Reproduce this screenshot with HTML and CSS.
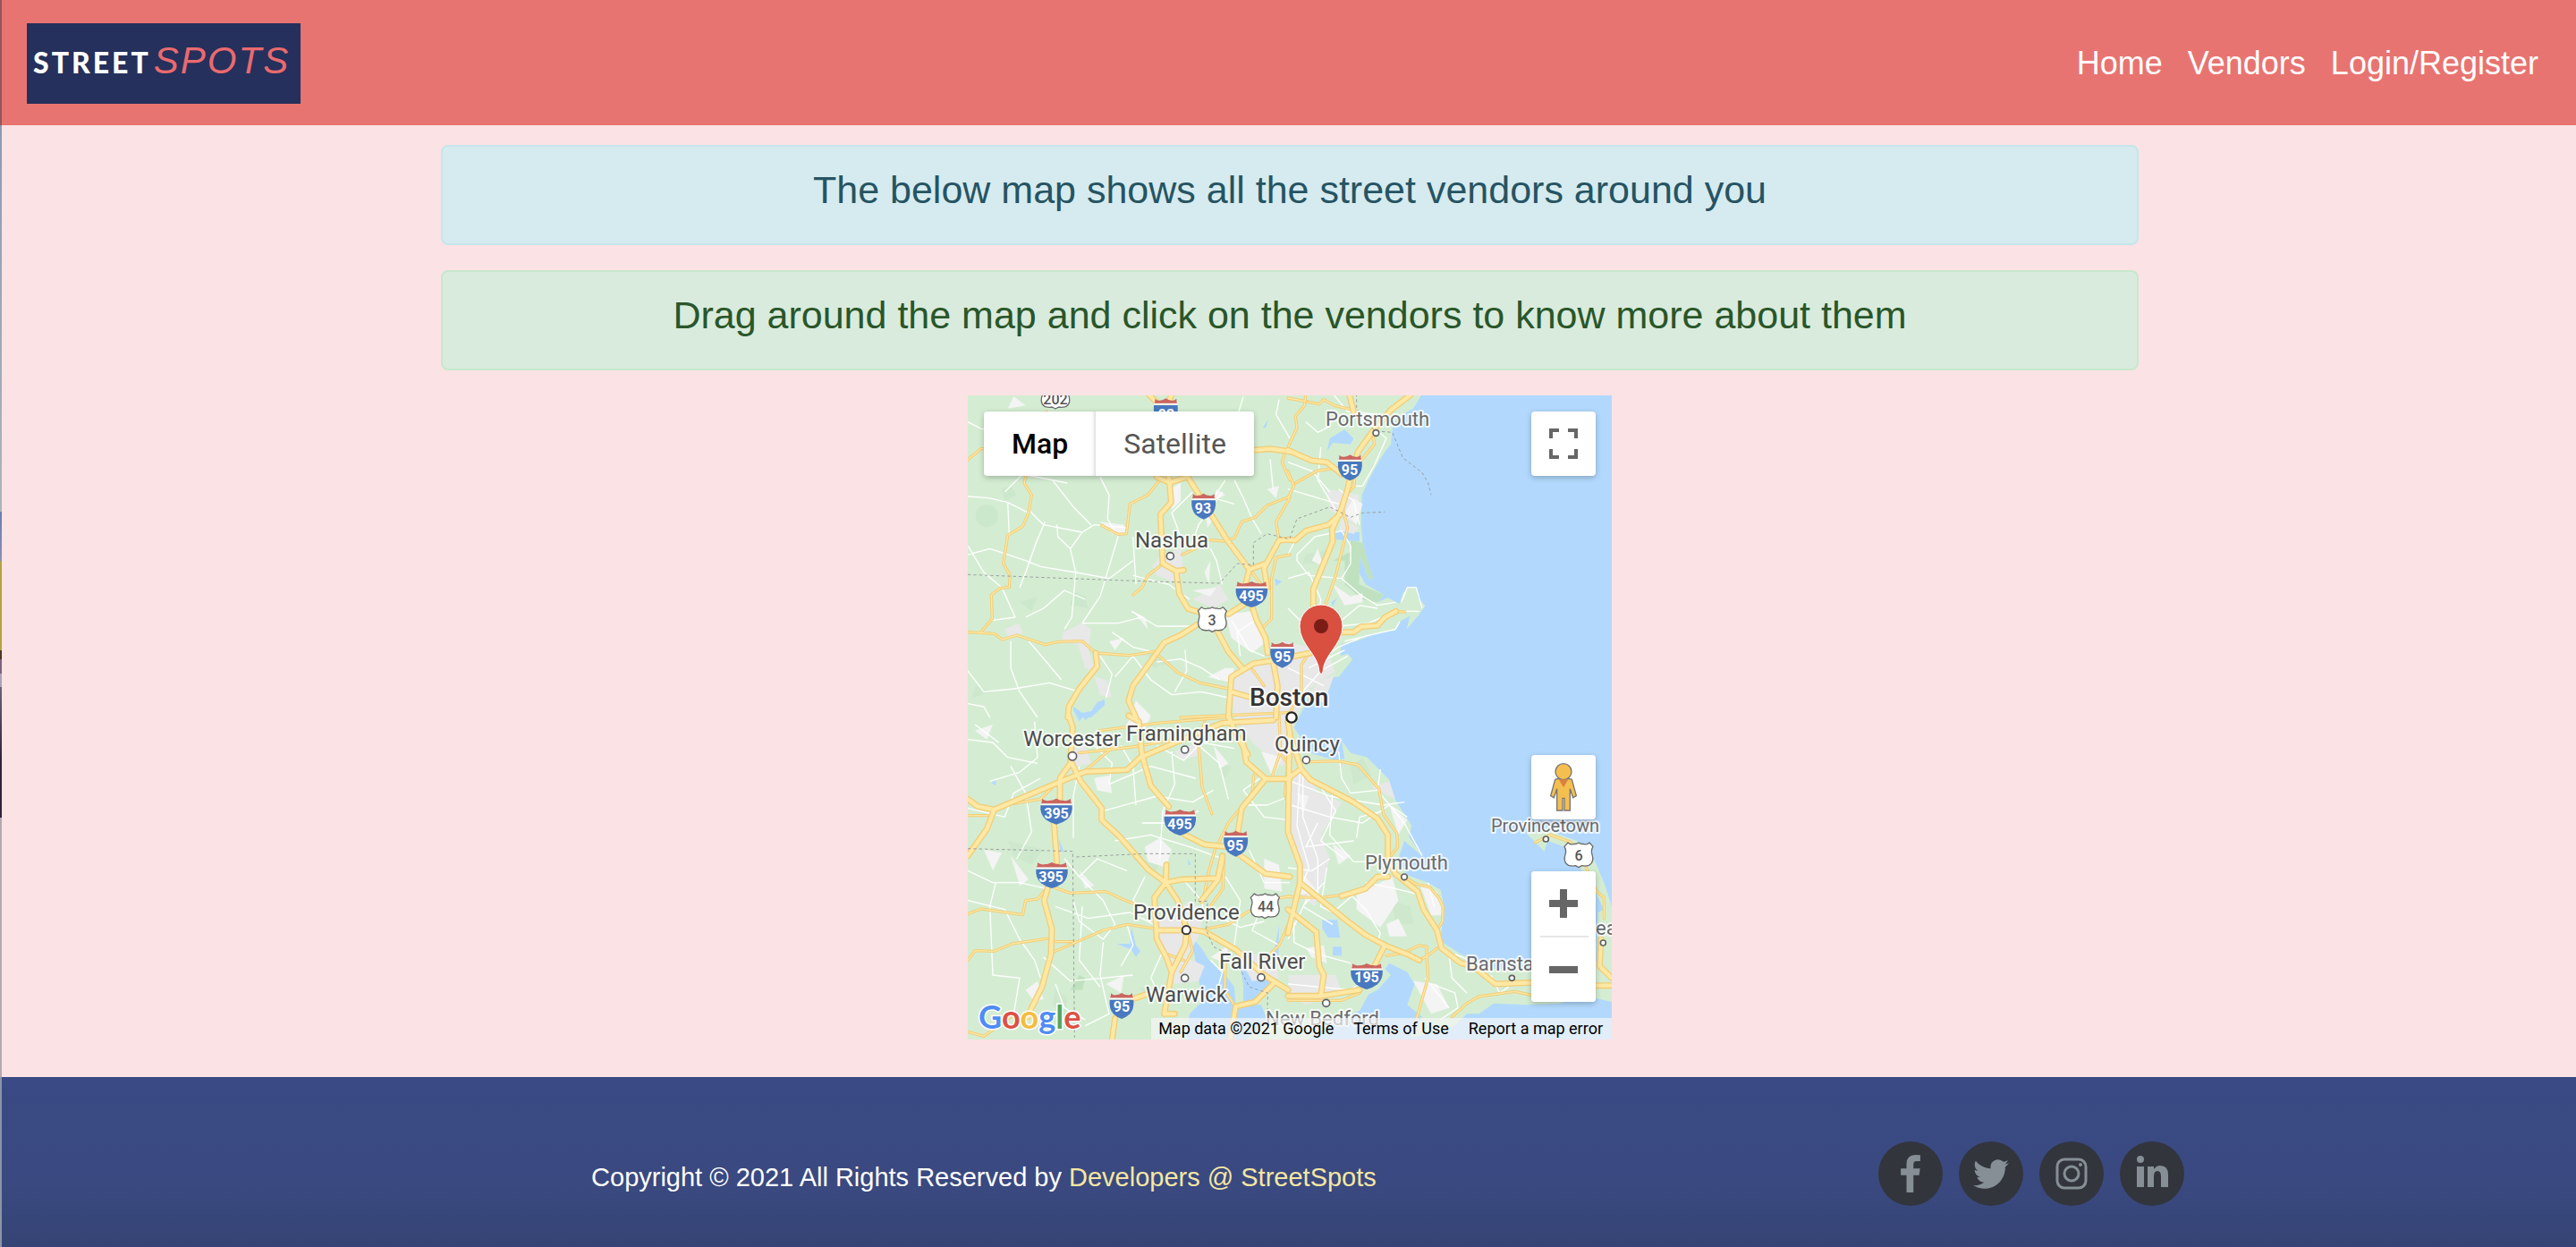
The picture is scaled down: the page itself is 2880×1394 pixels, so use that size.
FILE: index.html
```html
<!DOCTYPE html>
<html lang="en">
<head>
<meta charset="utf-8">
<meta name="viewport" content="width=device-width, initial-scale=1">
<title>StreetSpots</title>
<link rel="stylesheet" href="styles.css">
</head>
<body>
<header class="navbar">
  <a class="brand" href="#" aria-label="StreetSpots"><span class="brand-street">STREET</span><span class="brand-spots">SPOTS</span></a>
  <nav class="nav">
    <a href="#">Home</a>
    <a href="#">Vendors</a>
    <a href="#">Login/Register</a>
  </nav>
</header>

<main class="content">
  <h1 class="alert alert-info">The below map shows all the street vendors around you</h1>
  <h2 class="alert alert-success">Drag around the map and click on the vendors to know more about them</h2>

  <section class="map" aria-label="Vendor map">
    <svg class="map-canvas" viewBox="0 0 720 720" role="img" aria-label="Map of the Boston area">
      <defs>
        <symbol id="i2" viewBox="0 0 82 87" overflow="visible">
          <path d="M5 1Q12 9 21 7Q32 7 41 0Q50 7 61 7Q70 9 77 1Q76 10 80 19H2Q6 10 5 1Z" fill="#cb6660"/>
          <path d="M1 19H81" stroke="#fff" stroke-width="5"/>
          <path d="M1 23H81Q84 52 69 70Q58 81 41 87Q24 81 13 70Q-2 52 1 23Z" fill="#4878c0"/>
        </symbol>
        <symbol id="i3" viewBox="0 0 108 87" overflow="visible">
          <path d="M6 1Q17 9 28 7Q42 7 54 0Q66 7 80 7Q91 9 102 1Q101 10 106 19H2Q7 10 6 1Z" fill="#cb6660"/>
          <path d="M1 19H107" stroke="#fff" stroke-width="5"/>
          <path d="M1 23H107Q110 52 90 70Q75 82 54 87Q33 82 18 70Q-2 52 1 23Z" fill="#4878c0"/>
        </symbol>
        <symbol id="us" viewBox="0 0 100 86" overflow="visible">
          <path d="M14 2Q22 11 34 6Q42 8 50 2Q58 8 66 6Q78 11 86 2L98 15Q90 28 95 42Q103 68 84 78Q70 82 61 79L50 85L39 79Q30 82 16 78Q-3 68 5 42Q10 28 2 15Z" fill="#fff" stroke="#6b6b6b" stroke-width="4"/>
        </symbol>

        <g id="highways">
          <g>
            <path d="M610 0L680 70M690 0L670 60M680 270L688 365L652 405L660 570L705 595L730 592M705 595L715 670L745 722L790 735M735 265L875 490L950 590L935 650M640 280L682 298L740 280M880 740L935 705M775 775L720 810L665 835L640 870L560 980L545 1030L570 1086M840 790L880 865L930 925M1030 895L965 905L890 950L880 1086M960 715L975 760L1005 820L1012 870M1086 490L1050 492L1000 585L1010 650M950 590L1000 572M965 190L1020 185L1090 195M435 870L440 915L380 990L345 1050L342 1086M1030 900L1045 980L1040 1086M890 1000L960 1020"/>
          </g>
          <g transform="translate(1080)">
            <path d="M410 5L345 55L285 125L235 195L215 255L200 320L180 385L148 455L150 495L85 655L85 790M0 190L80 225L130 230L180 270M0 490L25 492L60 460L135 440L175 405M205 0L220 60M180 800L220 800L245 782L300 778L325 750L362 730M0 885L75 870"/>
          </g>
          <g transform="translate(0 1080)">
            <path d="M345 0L358 40L350 150M6 280L40 305L95 315L320 220L400 188L540 182L585 140L760 65L860 25L1030 15M95 315L70 380L6 470M350 160L315 210L315 280M355 160L385 220L455 310L455 350L515 405L610 515L670 560L720 550L845 545L860 470M295 360L305 490M275 575L262 620L288 715L285 800L255 910L220 980L210 1010M545 0L580 20L590 130L620 235L680 305M735 400L800 432L880 440L935 480L1005 530L1086 540M930 95L940 155L1005 212L925 310L910 400M1005 212L1086 212M880 0L905 60L945 130M672 500L670 560L632 610L640 750L672 810L690 860L665 1000L700 1000M670 560L710 620L740 715L800 725L905 785L1000 870L1080 920M740 720L735 770L690 860M640 720L720 720M860 480L845 550L790 620M605 935L560 950M500 1015L490 1086M885 1086L905 975L970 960L1030 900"/>
          </g>
          <g transform="translate(1080 1080)">
            <path d="M0 20L8 70L45 180L75 215L220 290L300 345L335 400L335 480L360 530L435 590L455 650L500 720L515 780L580 830L620 840L695 900L830 895M0 210L42 180M5 60L0 390L40 500L40 560L0 730M40 560L200 690L260 735L325 770L400 800L440 820M0 940L110 940L240 920M110 940L120 870L105 840L95 725L0 650M1000 905H1086M325 770L290 840M335 540L300 540L260 580L180 605M1050 750L1045 840L1086 880"/>
          </g>
        </g>

        <g id="arterials">
          <g>
            <path d="M6 222L50 185L130 183M270 60L230 150L195 300L220 340L210 400L190 445L140 475L125 570L148 610L145 650L115 652L85 675L88 755L50 800M6 800L95 805L122 825L170 810L265 842L310 832L390 830L435 870L550 878L630 865L710 935L785 970L880 990M650 290L610 340L550 370L538 470L510 472L455 442M770 520L725 540M560 675L590 650L610 610L655 575M810 490L865 495L900 485L925 430L970 415L1010 375L1086 345M1086 290L1060 230L1070 200M1086 350L1040 430L1050 490M1086 540L1040 550L1025 620L1025 755L990 790M960 600L990 640M720 1086L1086 1070M960 925L1000 980"/>
          </g>
          <g transform="translate(1080)">
            <path d="M0 15L105 35L120 20L155 40L220 55M60 0L55 40L25 75L30 115L0 180M0 350L20 310L0 260M25 300L100 258L165 250M285 140L290 170L245 225M225 260L222 310L195 340M185 390L200 450L160 610L125 710M362 732L392 732M70 870L45 910L45 1000M0 1080L45 1000"/>
          </g>
          <g transform="translate(0 1080)">
            <path d="M6 335L75 335M6 665L50 648L190 668L200 620L240 615L270 580M300 578L350 595L470 590L535 620L630 655M6 820L30 788L95 790L155 765L270 748M290 758L365 758M288 795L460 720L540 700L640 715M380 125L560 105L760 70M370 210L440 150L500 100M800 20L780 100L792 240L825 330M160 295L250 280L290 240M965 200L960 260L880 360L835 450L815 520L795 620M865 470L862 580L805 660M805 715L880 700L950 655M1040 615L1086 605M745 730L760 790L720 860M675 800L730 820M1086 690L1050 770L1010 810M870 830L868 920L900 970M6 1060L60 1075L150 1010M1050 0L1055 120L1025 210M1055 130L1080 160L1070 260L1086 330M450 50L640 25L880 5"/>
          </g>
          <g transform="translate(1080 1080)">
            <path d="M75 155L165 152L235 165L305 245L320 330L365 395L368 440L345 470M390 540L430 565L475 575L505 610L520 640L518 690L500 720M0 608L110 610L180 602M500 780L470 805L440 820L390 795L330 805M390 795L440 770L465 775L465 810L470 880L430 1020M550 1010L600 965L640 942L760 925L830 940M830 425L880 400L950 425M1000 510L1035 590L1060 610L1060 680M0 955L180 955L240 930"/>
          </g>
        </g>
      </defs>

      <rect width="720" height="720" fill="#b2d9fd"/>
      <g transform="translate(-2 -2) scale(.33333)" stroke-linejoin="round">
        <path class="land" d="M0 0H1530L1500 50L1465 70L1432 100L1425 170L1405 195L1380 235L1350 290L1328 340L1325 440L1330 500L1345 560L1366 622L1350 620L1322 545L1318 600L1340 640L1402 675L1380 700L1415 685L1455 705L1465 670L1485 650L1512 648L1515 685L1540 712L1520 740L1478 790L1490 745L1455 765L1440 795L1380 802L1310 830L1258 840L1256 880L1280 872L1296 892L1250 950L1215 950L1180 985L1150 1020L1130 1060L1100 1120L1120 1150L1105 1190L1170 1210L1240 1230L1270 1225L1260 1165L1290 1205L1345 1220L1370 1245L1420 1295L1422 1330L1435 1355L1495 1450L1485 1485L1530 1550L1470 1500L1450 1560L1480 1615L1550 1640L1592 1665L1605 1730L1595 1800L1590 1835L1660 1880L1770 1930H2100L2115 1900L2120 1740L2140 1730L2110 1670L2080 1620L2010 1520L1950 1500L1940 1535L1910 1505L1880 1475L1960 1468L2050 1500L2110 1570L2140 1640L2166 1720V2040L2080 2020L1990 2045L1880 2050L1770 2045L1720 2080L1680 2080L1640 2120L1580 2140L1490 2160L1530 2090L1480 2050L1505 1980L1480 1940L1420 1910L1405 1930L1425 1950L1380 2000L1350 2015L1320 2070L1260 2090L1140 2170H0Z"/>
        <path class="wood" d="M1290 490L1330 500L1366 622L1350 620L1322 545L1318 640L1402 675L1380 700L1330 690L1270 640L1270 560L1230 560L1290 530ZM380 1950L400 1960L390 2000L350 2000Z"/>
        <g class="haze"><circle cx="70" cy="410" r="38"/><path d="M120 320l30-10 20 30-40 20ZM150 220l40-15 10 40-40 10ZM360 660l40 20 10 40-60-10ZM180 700l60-20-20 50ZM600 860l90 40-60 20ZM1140 540l90-20-20 50-80 0ZM1290 1250l40-30 30 60-60 30ZM140 1500l120 30-40 50-60-30ZM560 1560l90 10-20 50ZM1430 1700l60 20 10 60-60 0ZM580 1990l60 10-20 50ZM300 1990l40 40-10 60-40-40ZM840 1240l50 10-20 40ZM30 980l60 20-70 20Z"/></g>
        <path class="water" d="M360 1050L390 1070L420 1065L440 1035L465 1025V1045L420 1086H390L380 1100L360 1060ZM995 115l20-30-10 30ZM1035 620l25 10-20 15ZM1220 150l50-30 30 30-10 20-60-5-20 30ZM1240 460l80 5v30l-80-5ZM1300 375l20-15v20l-10 15ZM1225 700l20-15-15 30ZM310 1490l20 50-15-10ZM555 1790l15 60 15 20-15 20-15-25-50-20 45 0ZM390 1080h30l-20 15ZM85 1305l15-10v20ZM745 1560l10 20h-10ZM1195 1765l50 0 10 60-40 0-20-30ZM1230 1855l30 0 0 30-30 0ZM755 1820L790 1860L815 1900L870 1950L900 1990L905 2060L880 2166H740L750 2080L790 2040L780 1960ZM915 1900L950 1950L1035 1930L1040 1960L1010 1990L960 2060L930 2040L930 1980ZM1030 1890L1050 1780L1048 1900ZM910 2050l80 0 20 50-70 66H890Z"/>
        <path class="urban" d="M625 580L655 540L720 520L730 600L690 630L640 610ZM760 690L850 640L880 690L830 720ZM920 930L1010 900L1060 830L1150 850L1220 880L1240 940L1180 970L1130 1040L1090 1130L1110 1200L1060 1250L960 1170L900 1080L890 980ZM325 800L390 770L420 790L410 860L435 930L400 920L375 840L320 830ZM690 1750L750 1700L800 1740L780 1820L740 1890L800 1920L780 1970L700 1980L650 1860L640 1760ZM340 1200L400 1180L420 1240L370 1250ZM1080 1950L1240 1950L1260 2010L1140 2050L1090 2020ZM1090 1260L1150 1270L1180 1340L1260 1370L1190 1480L1220 1560L1170 1720L1130 1690L1090 1480ZM1260 420L1320 450L1300 470L1250 460ZM910 1880L1030 1880L1050 1960L960 1970ZM430 950L470 960L490 1020L450 1010ZM130 790L180 770L190 805L140 815ZM1200 1040L1240 930L1150 990ZM700 1200L780 1170L790 1210L720 1230ZM1360 1320L1420 1300L1440 1360ZM980 1120l80-20 20 100-80 0ZM1210 320l110 20-10 100-90-50Z"/>
        <path class="suburb" d="M870 740L960 730L1010 830L960 870L890 820ZM570 1030L620 1080L590 1150L540 1110ZM430 1290l50-10 10 60-50-10ZM600 1520l50-30 40 40-20 60-60-20ZM1310 1680L1430 1620L1450 1700L1390 1790L1310 1730ZM1500 1970l80 10 40 80-60 20ZM30 1130l60-20-20 50ZM380 1600l50 50-30 10ZM150 1550l60 80-30 20ZM200 2000l40-30 20 60-30 10ZM990 1200l70 20-30 70ZM1000 1560l50 20 10 90-60-10ZM470 1980l60-30-10 60ZM450 430l80 10 10 30-50 0ZM820 560l-20 40 15 40ZM680 320l40-20 0 60-30 30ZM840 320l30 20-40 20ZM760 660l80-10-20 30ZM160 10l40 30-60 10ZM800 360l30 60-20 30ZM1160 560l20-40 20 60ZM1010 320l40-10-10 40ZM1410 1780l40-20 30 60-60 0ZM560 1700l40 20-20 30ZM820 1890l60-40-10 60ZM1110 1340l40 10-20 60ZM1300 350l30 20-20 70-40-40ZM1520 1640l60 30 20 80-40 0ZM1420 1380l60 50-30 50ZM560 730l40 20 10 40ZM480 830l50-10-30 40ZM1230 640l60 40 40-10 0 30-60 10ZM900 920l-30 0-60 30 80 20ZM60 1530l60 10-30 60ZM830 1180l50 60-30 20ZM660 1400l60 30-40 40ZM1120 1600l60 70-60 10ZM1230 1510l60 40-40 30ZM1140 1860l60-10 10 60-50-20Z"/>
        <g class="minor">
          <path d="M6 95L55 120L130 75L200 80M130 330L190 270L340 300M6 345L75 350L140 365L210 400M140 365L145 470M210 390L260 440L390 465L430 440L540 450M265 430L235 500L200 600L180 650M290 290L360 380L420 440M390 465L350 520L368 600L355 750L330 790M6 510L60 600L120 650L165 750L90 760M305 440L308 480L350 520M450 280L480 340L475 420L510 480L480 580L450 680L390 770L510 770L590 750M6 540L80 520L200 560L250 580L370 600L480 620L560 560M200 750L260 720L330 660L400 690M150 830L150 920L180 1000L240 1086M6 930L60 1000L160 990L280 970L380 1000M210 830L270 900L320 960M450 880L490 940L470 1020M500 950L560 880L620 960M620 960L690 1010L790 1000L880 1020M555 730L640 780L770 780M760 330L690 400L720 480M870 290L830 350L900 370M1086 150L1040 70L1050 20M860 330L780 440L755 510M900 290L930 350L960 420L990 470M930 10L900 110L880 200M1020 220L1030 320M640 870L560 850L490 800M735 860L740 930L700 1000M850 960L790 920L720 890L640 900M860 640L840 560L820 520M750 690L680 640L560 610M560 480L570 640M6 1040L60 1050L80 1086M970 760L910 800L920 880M890 760L950 860L1000 880"/>
          <path d="M1080 230L1160 260L1220 330M1190 180L1180 290L1240 390M1140 95L1180 130L1220 110M1080 320L1180 350L1250 370M1300 60L1360 110L1410 150L1370 240L1330 310M1230 0L1280 60L1380 70M1290 310L1330 310M1110 540L1170 480L1260 460L1290 510L1290 570L1260 620L1150 610L1110 560ZM1080 620L1150 600L1190 690L1180 780M1260 620L1330 680L1380 710L1440 700M1260 760L1320 710L1380 720M1250 780L1350 770L1440 730L1520 730M1460 700L1480 650L1510 650L1530 720M1180 900L1250 850L1320 820M1150 920L1270 860M1120 1010L1190 930L1280 880M1110 480L1080 540M1270 830L1440 790L1455 765M1250 320L1300 360L1320 440M1080 720L1130 770M1080 920L1200 980"/>
          <path d="M6 1160L90 1170L140 1220L240 1240M30 1110L110 1170M230 1100L240 1220L180 1270L80 1300M150 1250L200 1340L220 1470L170 1560M6 1390L130 1420L160 1340L250 1290M380 1250L360 1350L360 1490M330 1560L380 1620L460 1700L500 1780L460 1830L380 1770L360 1700M6 1600L90 1640L180 1640L270 1660M6 1700L130 1730L180 1830L230 1900L250 1960M100 1640L80 1720L90 1950L180 1960L160 2080M260 1890L350 1970L460 1960L560 1950M300 1980L330 2060L400 2100M460 1840L450 1950L480 2080L400 2120M540 1780L560 1850L520 1920M430 1180L490 1240L480 1310L620 1250L770 1290M460 1400L640 1350L760 1370L830 1330M520 1180L560 1250L570 1380M690 1200L700 1310L660 1400L650 1560M780 1180L850 1240L880 1360M500 1500L620 1480L750 1520L860 1560M640 1180L730 1230L790 1170L900 1190M930 1380L1010 1380L1086 1350M600 1620L560 1700L640 1780M720 1620L790 1700L800 1760M380 1620L440 1560L540 1600M950 1530L1000 1640L1086 1640M870 1620L920 1700L900 1850M1000 1700L960 1800L1050 1850M1000 1280L930 1330L1000 1420L1086 1430M840 1750L920 1790L1000 1770M660 1870L620 1960L680 2080M820 1900L860 1940L840 2010M590 1440L700 1440L780 1400M300 1720L410 1760L550 1740L630 1780M390 1720L380 1900L450 1990"/>
          <path d="M1110 1260L1190 1320L1240 1400L1190 1500L1270 1560M1090 1380L1220 1420L1330 1440L1420 1380L1480 1420M1130 1220L1130 1420L1180 1560L1180 1700M1250 1200L1260 1290L1290 1340L1380 1330M1090 1300L1220 1350L1400 1380L1470 1370M1120 1270L1110 1450L1150 1590L1110 1690M1390 1260L1380 1330L1470 1440L1530 1550M1310 1490L1320 1420L1400 1400M1230 1330L1220 1480L1300 1570L1360 1570M1150 1680L1080 1830M1210 1590L1190 1720L1230 1740L1300 1680M1290 1680L1340 1730L1390 1810L1380 1840M1340 1640L1440 1660L1520 1680M1200 1640L1130 1720L1230 1780M1560 1980L1640 2010L1650 2060L1590 2100M1620 1880L1630 1960L1680 2010M1540 1960L1620 2060M1760 1950L1790 2010L1820 1990M1640 1880L1760 1930M1080 1590L1160 1600L1220 1560M1180 1440L1140 1520L1300 1500M1100 1760L1100 1840L1180 1880L1290 1910M1550 1640L1570 1720M1080 1980L1290 2000L1370 1940"/>
        </g>
        <use href="#arterials" class="art-case"/><use href="#arterials" class="art-line"/>
        <use href="#highways" class="hwy-case"/><use href="#highways" class="hwy-line"/>
        <path class="border" d="M6 607L400 622L620 630L850 636L910 570L964 575L964 500L1010 470L1085 488L1110 420L1220 380L1290 415L1330 400L1405 397M1310 0V50L1370 125L1430 130L1465 215L1530 265L1550 300L1560 340M6 1526L358 1535L364 2160M370 1554L600 1543H769V1703L810 1702L806 1800L830 1855L900 1890L950 1990L1012 2010L1010 2100"/>

        <use href="#i2" x="629" y="16" width="82" height="87"/>
        <use href="#i2" x="756" y="335" width="82" height="87"/>
        <use href="#i3" x="904" y="630" width="108" height="87"/>
        <use href="#i2" x="1020" y="833" width="82" height="87"/>
        <use href="#i2" x="1247" y="205" width="82" height="87"/>
        <use href="#i3" x="249" y="1358" width="108" height="87"/>
        <use href="#i3" x="664" y="1395" width="108" height="87"/>
        <use href="#i2" x="864" y="1466" width="82" height="87"/>
        <use href="#i3" x="234" y="1572" width="108" height="87"/>
        <use href="#i2" x="481" y="2010" width="82" height="87"/>
        <use href="#i3" x="1290" y="1911" width="108" height="87"/>
        <use href="#us" x="243" y="-34" width="114" height="86"/>
        <use href="#us" x="776" y="714" width="100" height="86"/>
        <use href="#us" x="953" y="1675" width="100" height="86"/>
        <use href="#us" x="2005" y="1504" width="100" height="86"/>
        <g class="towns">
          <circle cx="685" cy="545" r="12"/><circle cx="1375" cy="132" r="10"/>
          <circle class="capital" cx="1092" cy="1086" r="17"/><circle cx="357" cy="1216" r="14"/>
          <circle cx="734" cy="1194" r="12"/><circle cx="1141" cy="1229" r="12"/>
          <circle class="city" cx="739" cy="1799" r="14"/><circle cx="734" cy="1960" r="12"/>
          <circle cx="990" cy="1958" r="12"/><circle cx="1208" cy="2044" r="12"/>
          <circle cx="1470" cy="1621" r="10"/><circle cx="1945" cy="1494" r="9"/>
          <circle cx="1831" cy="1960" r="9"/><circle cx="2137" cy="1842" r="9"/>
        </g>
      </g>

      <g class="shield-text">
        <text x="222" y="27">93</text><text x="263" y="132">93</text><text x="317" y="230">495</text><text x="352" y="298">95</text><text x="427" y="89">95</text>
        <text x="99" y="473">395</text><text x="237" y="485">495</text><text x="299" y="509">95</text><text x="93" y="544">395</text><text x="172" y="689">95</text><text x="446" y="656">195</text>
      </g>
      <g class="route-text">
        <text x="98" y="10">202</text><text x="273" y="257">3</text><text x="333" y="577">44</text><text x="683" y="520">6</text>
      </g>
      <g class="place">
        <text x="187" y="170">Nashua</text><text x="62" y="392">Worcester</text><text x="177" y="386">Framingham</text>
        <text x="343" y="398">Quincy</text><text x="185" y="586">Providence</text><text x="199" y="678">Warwick</text><text x="281" y="641">Fall River</text>
      </g>
      <g class="place place-minor">
        <text x="400" y="34">Portsmouth</text><text x="444" y="530">Plymouth</text><text x="557" y="643">Barnsta</text>
        <text x="702" y="603">ea</text><text x="333" y="704">New Bedford</text>
      </g>
      <text class="place place-small" x="585" y="488">Provincetown</text>
      <text class="place place-main" x="315" y="347">Boston</text>
      <path d="M393 309C392 289 371 279 371 258A24 24 0 0 1 419 258C419 279 398 289 397 309Q395 314 393 309Z" fill="#d94f40" stroke="#fff" stroke-width="1"/>
      <circle cx="395" cy="258" r="8" fill="#7a1d17"/>
      <text class="google" x="12" y="708"><tspan fill="#4f8cf5">G</tspan><tspan fill="#dc5144">o</tspan><tspan fill="#f4bd41">o</tspan><tspan fill="#4f8cf5">g</tspan><tspan fill="#58a55c">l</tspan><tspan fill="#dc5144">e</tspan></text>
    </svg>

    <div class="map-types">
      <button type="button" class="map-type is-active">Map</button>
      <button type="button" class="map-type">Satellite</button>
    </div>
    <button type="button" class="map-control map-fullscreen" aria-label="Toggle fullscreen view">
      <svg viewBox="0 0 32 34" width="32" height="34" fill="none" stroke="#666" stroke-width="4"><path d="M11 2H2V11M21 2H30V11M2 23V32H11M30 23V32H21"/></svg>
    </button>
    <button type="button" class="map-control map-pegman" aria-label="Open Street View">
      <svg viewBox="0 0 90 162" width="30" height="54" fill="#f5bf50" stroke="#757575" stroke-width="4"><path d="M17 55Q20 53 28 53H62Q70 53 73 55L88 110L77 116L67 86V159H48V118H42V159H23V86L13 116L2 110Z"/><circle cx="45" cy="29" r="27"/><path d="M29 55H61L45 82Z" fill="#d98240" stroke="none"/></svg>
    </button>
    <div class="map-zoom">
      <button type="button" class="map-control" aria-label="Zoom in"><svg viewBox="0 0 32 32" width="32" height="32" fill="#666"><path d="M12 0H20V12H32V20H20V32H12V20H0V12H12Z"/></svg></button>
      <button type="button" class="map-control" aria-label="Zoom out"><svg viewBox="0 0 32 8" width="32" height="8" fill="#666"><path d="M0 0H32V8H0Z"/></svg></button>
    </div>
    <div class="map-credits">
      <span>Map data ©2021 Google</span>
      <a href="#">Terms of Use</a>
      <a href="#">Report a map error</a>
    </div>
  </section>
</main>

<footer class="footer">
  <div class="footer-inner">
    <p class="copyright">Copyright © 2021 All Rights Reserved by <a href="#">Developers @ StreetSpots</a></p>
    <div class="social">
      <a href="#" aria-label="Facebook"><svg viewBox="95 0 864 1664" width="22" height="42"><path d="M959 12v264H802q-86 0-116 36t-30 108v189h293l-39 296H656v759H350V905H95V609h255V391q0-186 104-288.500T731 0q147 0 228 12z"/></svg></a>
      <a href="#" aria-label="Twitter"><svg viewBox="0 0 512 416" width="40" height="33"><path d="M459 104c0 5 0 9 0 14 0 138-105 298-298 298C102 416 46 399 0 369c8 1 16 1 25 1 49 0 94-16 130-45-46-1-85-31-98-73 6 1 13 2 20 2 10 0 19-1 28-4-48-10-84-52-84-103v-1c14 8 30 13 47 13C40 141 22 109 22 72c0-19 5-37 14-53 52 64 129 105 216 110-2-8-3-16-3-24C249 47 296 0 354 0c30 0 57 13 77 33 23-4 46-13 66-25-8 24-24 45-46 58 21-2 41-8 60-16-14 21-32 39-52 54z"/></svg></a>
      <a href="#" aria-label="Instagram"><svg viewBox="0 0 36 36" width="36" height="36"><rect x="2" y="2" width="32" height="32" rx="8" fill="none" stroke="#868e96" stroke-width="3"/><circle cx="18" cy="18" r="8" fill="none" stroke="#868e96" stroke-width="3"/><circle cx="28" cy="8" r="2"/></svg></a>
      <a href="#" aria-label="LinkedIn"><svg viewBox="0 0 36 42" width="36" height="42"><circle cx="5" cy="5" r="4"/><path d="M1 13H9V36H1ZM13 13H20V16Q23 12 27 12Q36 12 36 22V36H28V24Q28 18 24 18Q20 18 20 24V36H13Z"/></svg></a>
    </div>
  </div>
</footer>
</body>
</html>
```
FILE: styles.css
```css
* {
  box-sizing: border-box;
}

body {
  margin: 0;
  min-height: 100vh;
  padding-left: 2px;
  display: flex;
  flex-direction: column;
  font-family: "Liberation Sans", Arial, sans-serif;
  /* thin coloured strip down the left edge of the page */
  background:
    linear-gradient(#93565c 0 140px, #8a9bb5 140px, #a9b6bb 572px, #6a7cb4 572px, #8791b5 627px, #b3a341 627px 727px, #4d3526 727px 737px, #7d6280 737px 753px, #aaa2bb 753px 768px, #6b6279 768px, #33203c 850px 914px, #b3aaae 914px 1204px, #8d93a8 1204px) left top / 2px 100% no-repeat,
    #fbe2e4;
}

a {
  color: inherit;
  text-decoration: none;
}

button {
  margin: 0;
  border: 0;
  padding: 0;
  font: inherit;
}

.navbar {
  display: flex;
  align-items: center;
  justify-content: space-between;
  height: 140px;
  padding: 2px 42px 0 28px;
  background: #e87471;
}

.brand {
  display: flex;
  align-items: baseline;
  width: 306px;
  height: 90px;
  padding: 18px 0 0 7px;
  background: #25305c;
  line-height: 48px;
}

.brand-street {
  color: #fff;
  font: 900 32px/48px Lato, sans-serif;
  letter-spacing: 3px;
}

.brand-spots {
  margin-left: 3px;
  color: #ea6a6e;
  font-size: 42px;
  font-style: italic;
  letter-spacing: 2px;
}

.nav {
  display: flex;
  gap: 28px;
  font-size: 36px;
  color: #fff;
}

.content {
  flex: 1;
  display: flex;
  flex-direction: column;
  align-items: center;
  gap: 28px;
  padding: 22px 0 42px 2px;
}

.alert {
  width: 66%;
  min-height: 112px;
  margin: 0;
  border: 2px solid;
  border-radius: 8px;
  padding: 22px 40px 34px;
  font-size: 43px;
  font-weight: 400;
  line-height: 52px;
  text-align: center;
}

.alert-info {
  color: #265463;
  background: #d6ebef;
  border-color: #c4e6ec;
}

.alert-success {
  color: #29562a;
  background: #d9ebdc;
  border-color: #c7e8cf;
}

/* Map widget */
.map {
  position: relative;
  width: 720px;
  max-width: 100%;
  overflow: hidden;
  font-family: Roboto, sans-serif;
}

.map-canvas {
  display: block;
  width: 100%;
}

.land { fill: #d4edd2; }
.wood { fill: #c0e1bf; }
.haze { fill: #cae6ca; opacity: .7; }
.water { fill: #b2d9fd; }
.urban { fill: #e8e8e8; }
.suburb { fill: #f3f4f3; }

.minor { fill: none; stroke: #fff; stroke-width: 4; }

.art-case, .art-line, .hwy-case, .hwy-line {
  fill: none;
  stroke-linecap: round;
}

.art-case { stroke: #f2cd78; stroke-width: 10; }
.art-line { stroke: #fde8a4; stroke-width: 4; }
.hwy-case { stroke: #f2cd78; stroke-width: 21; }
.hwy-line { stroke: #fde8a4; stroke-width: 13; }

.border {
  fill: none;
  stroke: #9b9ea0;
  stroke-width: 3;
  stroke-dasharray: 10 9;
}

.towns { fill: #fff; stroke: #5f6062; stroke-width: 5; }
.capital { stroke: #222; stroke-width: 7; }
.city { stroke: #333; stroke-width: 6; }

.shield-text {
  fill: #fff;
  font-size: 16px;
  font-weight: 700;
  text-anchor: middle;
}

.route-text {
  fill: #555;
  font-size: 16px;
  font-weight: 500;
  text-anchor: middle;
}

.place {
  fill: #4b4c4e;
  font-size: 24px;
  stroke: #fff;
  stroke-opacity: .8;
  stroke-width: 4px;
  stroke-linejoin: round;
  paint-order: stroke;
}

.place-minor { fill: #6a6c6f; font-size: 22px; }
.place-small { fill: #6a6c6f; font-size: 20px; }
.place-main { fill: #333; font-size: 28px; font-weight: 500; }

.google {
  font: 700 36px Lato, sans-serif;
  stroke: #fff;
  stroke-width: 3px;
  paint-order: stroke;
}

.map-types {
  position: absolute;
  top: 18px;
  left: 18px;
  display: flex;
  height: 72px;
  border-radius: 4px;
  box-shadow: 0 2px 6px rgba(0, 0, 0, .25);
  overflow: hidden;
}

.map-type {
  padding: 0 31px;
  background: #fff;
  color: #565656;
  font-size: 32px;
}

.map-type.is-active {
  color: #000;
  font-weight: 500;
  box-shadow: inset -3px 0 4px -2px rgba(0, 0, 0, .2);
}

.map-control {
  display: flex;
  align-items: center;
  justify-content: center;
  width: 72px;
  height: 72px;
  border-radius: 4px;
  background: #fff;
}

.map-fullscreen,
.map-pegman,
.map-zoom {
  position: absolute;
  right: 18px;
  border-radius: 4px;
  box-shadow: 0 2px 6px rgba(0, 0, 0, .25);
}

.map-fullscreen { top: 18px; }
.map-pegman { bottom: 246px; }

.map-zoom {
  bottom: 42px;
  background: #fff;
}

.map-zoom .map-control + .map-control::before {
  content: "";
  position: absolute;
  top: 72px;
  left: 10px;
  right: 8px;
  height: 2px;
  background: #e6e6e6;
}

.map-zoom .map-control + .map-control {
  margin-top: 2px;
}

.map-credits {
  position: absolute;
  right: 0;
  bottom: 0;
  display: flex;
  gap: 22px;
  padding: 0 10px 0 8px;
  background: rgba(245, 245, 245, .7);
  color: #000;
  font-size: 18px;
  line-height: 24px;
}

/* Footer */
.footer {
  padding: 72px 0 46px;
  background: linear-gradient(#394a84 0, #3a4980 120px, #354473 100%);
}

.footer-inner {
  display: flex;
  align-items: center;
  width: 79%;
  margin: 0 auto;
}

.copyright {
  flex: 0 0 70%;
  margin: 0;
  padding-top: 8px;
  color: #fff;
  font-size: 29px;
  line-height: 36px;
  text-align: center;
}

.copyright a {
  color: #f5e6a3;
}

.social {
  flex: 1;
  display: flex;
  justify-content: flex-end;
  gap: 18px;
  padding-right: 136px;
}

.social a {
  display: flex;
  align-items: center;
  justify-content: center;
  width: 72px;
  height: 72px;
  border-radius: 50%;
  background: #33353d;
}

.social svg {
  fill: #868e96;
}
```
